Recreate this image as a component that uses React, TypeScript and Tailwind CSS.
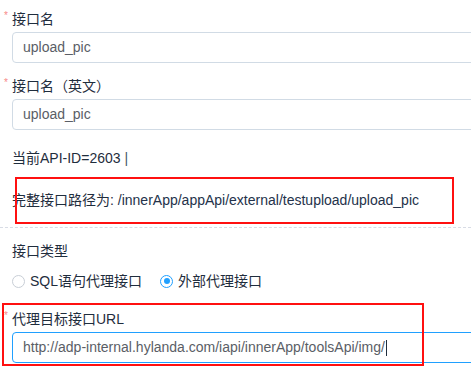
import type { FC, ReactNode } from 'react';

// -----------------------------------------------------------------------------
// Pieces
// -----------------------------------------------------------------------------

const Label: FC<{ required?: boolean; children: ReactNode }> = ({ required, children }) => (
  <div className="mb-[2px] flex h-[22px] items-center leading-[22px] text-[#1f2d3d]">
    {required && (
      <span className="-ml-[8px] mr-[1px] w-[7px] self-start pt-[1px] text-[10px] leading-[14px] text-[#f78989]">
        *
      </span>
    )}
    {children}
  </div>
);

const Input: FC<{ value: string; focused?: boolean }> = ({ value, focused }) => (
  <div
    className={`flex h-[31px] w-[480px] items-center rounded-[4px] border pl-[10px] text-[#5a5e66] ${
      focused ? 'border-[#20a0ff]' : 'border-[#d1dbe5]'
    }`}
  >
    {value}
    {focused && <span className="ml-[1px] h-[16px] w-px bg-[#1f2d3d]" />}
  </div>
);

const Radio: FC<{ checked?: boolean; label: string }> = ({ checked, label }) => (
  <div className="flex items-center gap-[5px]">
    <span
      className={`flex h-[13px] w-[13px] items-center justify-center rounded-full border bg-white ${
        checked ? 'border-[#20a0ff]' : 'border-[#c8ced6]'
      }`}
    >
      {checked && <span className="h-[6px] w-[6px] rounded-full bg-[#20a0ff]" />}
    </span>
    <span className="text-[#1f2d3d]">{label}</span>
  </div>
);

// -----------------------------------------------------------------------------
// Component
// -----------------------------------------------------------------------------

const App: FC = () => {
  return (
    <div
      className="h-[376px] w-[471px] overflow-hidden bg-white text-[14px]"
      style={{ fontFamily: "'Liberation Sans', 'Noto Sans CJK SC', sans-serif" }}
    >
      <div className="pl-[12px] pt-[8px]">
        <Label required>接口名</Label>
        <Input value="upload_pic" />

        <div className="mt-[12px]">
          <Label required>接口名（英文）</Label>
          <Input value="upload_pic" />
        </div>

        <div className="mt-[17px] h-[22px] leading-[22px] text-[#1f2d3d]">
          当前API-ID=2603 <span className="text-[#48576a]">|</span>
        </div>

        <div className="relative mt-[20px] h-[22px] leading-[22px] text-[#1f2d3d]">
          完整接口路径为: <span className="text-[#24324a]">/innerApp/appApi/external/testupload/upload_pic</span>
          <div className="pointer-events-none absolute -top-[12px] left-[3px] h-[47px] w-[439px] border-2 border-[#ff1010]" />
        </div>
      </div>

      <div className="mt-[16px] border-t border-dashed border-[#d8dce5]" />

      <div className="pl-[12px]">
        <div className="mt-[12px] h-[22px] leading-[22px] text-[#1f2d3d]">接口类型</div>

        <div className="mt-[8px] flex h-[22px] items-center gap-[18px]">
          <Radio label="SQL语句代理接口" />
          <Radio checked label="外部代理接口" />
        </div>

        <div className="relative mt-[16px]">
          <Label required>代理目标接口URL</Label>
          <Input value="http://adp-internal.hylanda.com/iapi/innerApp/toolsApi/img/" focused />
          <div className="pointer-events-none absolute -left-[10px] -top-[5px] h-[63px] w-[422px] border-2 border-[#ff1010]" />
        </div>
      </div>
    </div>
  );
};

export default App;
